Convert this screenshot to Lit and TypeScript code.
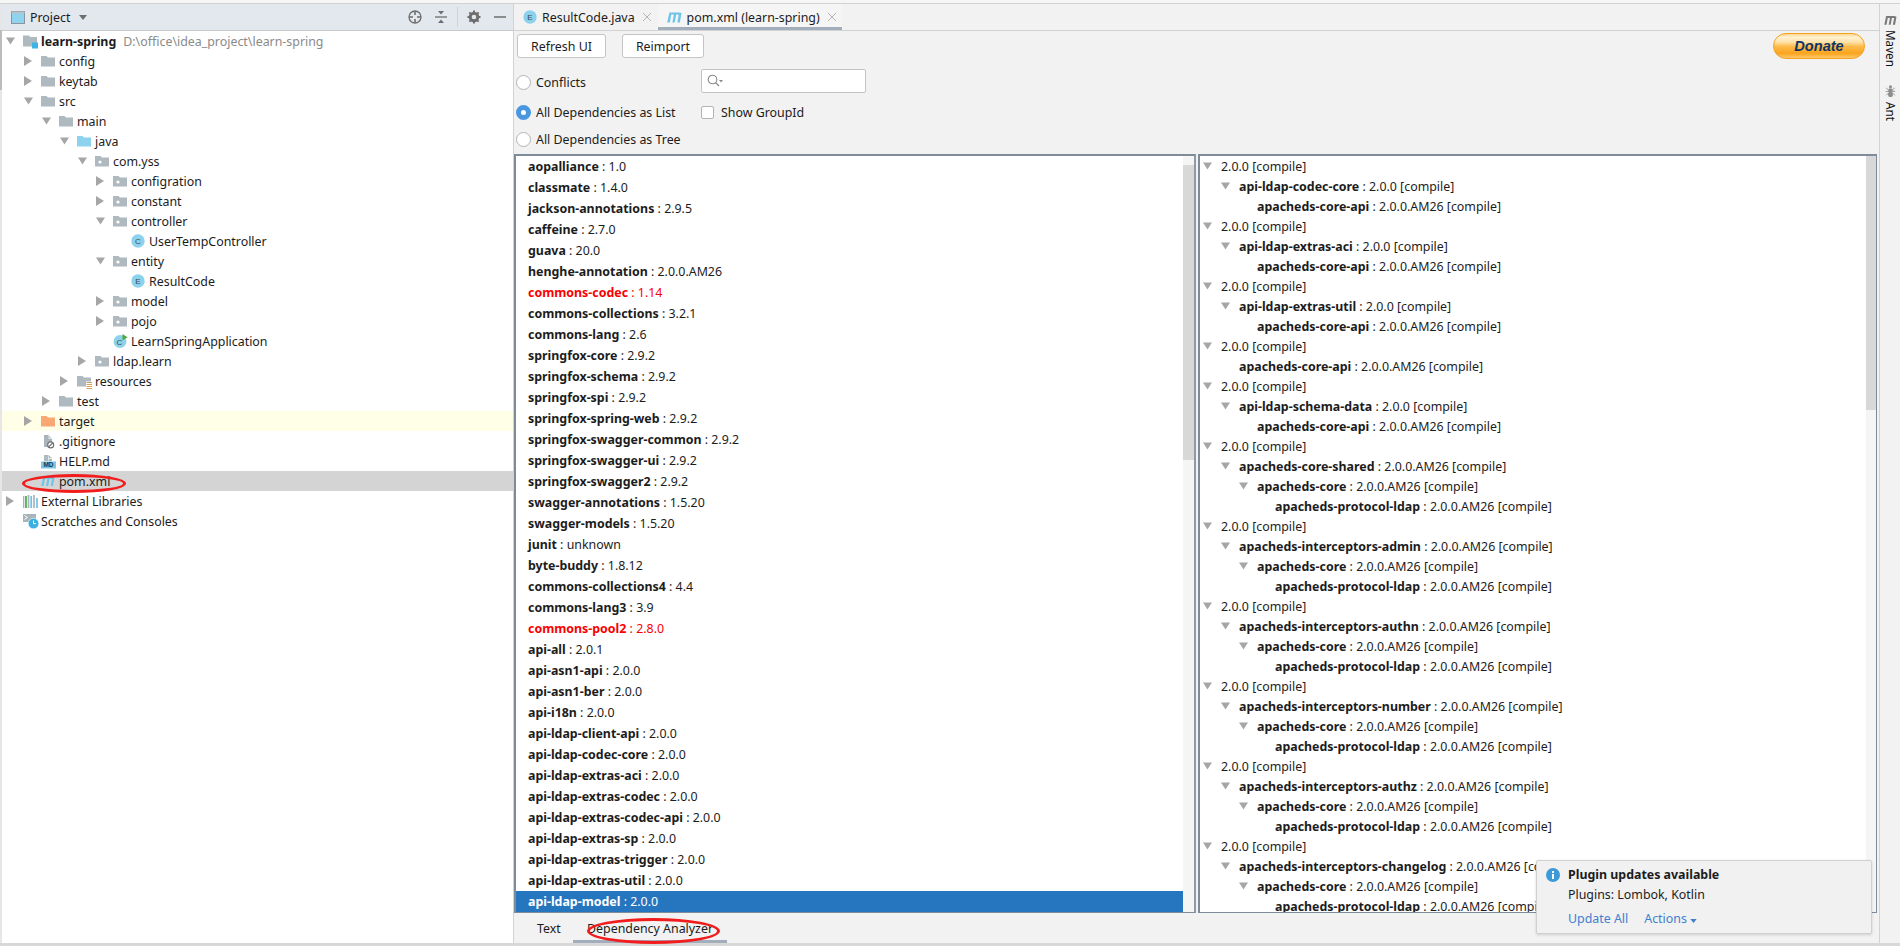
import { LitElement, html, css, svg } from "lit";
import { customElement } from "lit/decorators.js";

const FOLDER = "M0 2h5.500l1.500 1.500H14V12.500H0z";
const folder = (c: string, dot = false) => html`<svg class="ic" viewBox="0 0 14 14" width="14" height="14"><path d="${FOLDER}" fill="${c}"/>${dot ? svg`<circle cx="5" cy="8" r="1.600" fill="#fff"/>` : ""}</svg>`;
const grey = "#aeb9c0";
const circleIcon = (l: string, size = 14) => html`<svg class="ic" viewBox="0 0 14 14" width="${size}" height="${size}"><circle cx="7" cy="7" r="6.700" fill="#8dd2ec"/><text x="7" y="10" font-size="8" font-family="Liberation Sans" text-anchor="middle" fill="#3c4a52">${l}</text></svg>`;
const mIcon = (w = 14, h = 12) => html`<svg class="ic" viewBox="0 0 14 11" width="${w}" height="${h}"><path d="M2.200 1.200H11.200L13.600 1.800 12 10.600H9.600L11 3.400 8.600 3.200 7.200 10.600H5L6.400 3.200 4 3.200 2.600 10.600H.2z" fill="#6fc5e8"/></svg>`;

const icons: Record<string, any> = {
  module: html`<svg class="ic" viewBox="0 0 15 15" width="15" height="15"><path d="M0 1.500h6l1.200 1.500H14V12.500H0z" fill="${grey}"/><rect x="9" y="8.500" width="6" height="6" fill="#3fb4e4"/></svg>`,
  f: folder(grey),
  java: folder("#8dd3ef"),
  pkg: folder(grey, true),
  res: html`<svg class="ic" viewBox="0 0 15 15" width="15" height="15"><path d="M0 2h5.500l1.500 1.500H14V12.500H0z" fill="${grey}"/><rect x="9" y="7.500" width="6.500" height="7.500" fill="#fff"/><path d="M9.500 8.500h5.500M9.500 10.500h5.500M9.500 12.500h5.500M9.500 14.500h5.500" stroke="#d9a05c" stroke-width="1"/></svg>`,
  target: folder("#f9a873"),
  c: circleIcon("C"),
  e: circleIcon("E"),
  run: html`<svg class="ic" viewBox="0 0 15 14" width="15" height="14"><circle cx="7" cy="7.500" r="6.500" fill="#8dd2ec"/><text x="6.500" y="10.500" font-size="8" font-family="Liberation Sans" text-anchor="middle" fill="#3c4a52">C</text><path d="M9.500 0l5 3.200-5 3.200z" fill="#4fa83d"/></svg>`,
  git: html`<svg class="ic" viewBox="0 0 14 15" width="14" height="15"><path d="M3 1h4l.5 0v4h3.500v3H3z" fill="#a8b3ba"/><path d="M3 8h4v5H3z" fill="#a8b3ba"/><path d="M7 .5l4 4H7z" fill="#c5ccd1"/><circle cx="9.700" cy="10.900" r="3" fill="#fff" stroke="#6a7075" stroke-width="1.100"/><path d="M7.700 12.800l4-3.800" stroke="#6a7075" stroke-width="1.100"/></svg>`,
  md: html`<svg class="ic" viewBox="0 0 15 15" width="15" height="15"><path d="M3 1h4v6H3z M7.500 .8l3.500 3.500H7.500z M7.500 5h3.500v2H7.500z" fill="#aeb9c0"/><rect x="0" y="7.500" width="15" height="7" fill="#7cc6e6"/><text x="7.500" y="13.300" font-size="6.500" font-weight="700" font-family="Liberation Sans" text-anchor="middle" fill="#23353f">MD</text></svg>`,
  m: mIcon(),
  lib: html`<svg class="ic" viewBox="0 0 15 13" width="15" height="13"><path d="M.5 1v12M5.500 0v13" stroke="#a8b3ba" stroke-width="1.700"/><path d="M3 1v12" stroke="#4aa94a" stroke-width="1.700"/><path d="M8.200 1v12" stroke="#6fc2e6" stroke-width="1.700"/><path d="M11 0v13" stroke="#a8b3ba" stroke-width="1.700"/><path d="M14 3v10" stroke="#6fc2e6" stroke-width="1.700"/></svg>`,
  scr: html`<svg class="ic" viewBox="0 0 16 16" width="16" height="16"><rect x="0" y="1" width="13" height="8" fill="#a8b3ba"/><path d="M1.500 2.500l3 2-3 2" fill="none" stroke="#fff" stroke-width="1"/><circle cx="10.500" cy="10.500" r="5.300" fill="#39afe2" stroke="#fff" stroke-width=".6"/><path d="M10.500 7.500v3.200h2.400" fill="none" stroke="#fff" stroke-width="1"/></svg>`,
};

type Row = [number, string, string, string, string?, string?];
const tree: Row[] = [
  [0, "d", "module", "learn-spring", "D:\\office\\idea_project\\learn-spring", "bold"],
  [1, "r", "f", "config"], [1, "r", "f", "keytab"], [1, "d", "f", "src"], [2, "d", "f", "main"], [3, "d", "java", "java"],
  [4, "d", "pkg", "com.yss"], [5, "r", "pkg", "configration"], [5, "r", "pkg", "constant"], [5, "d", "pkg", "controller"],
  [6, "", "c", "UserTempController"], [5, "d", "pkg", "entity"], [6, "", "e", "ResultCode"], [5, "r", "pkg", "model"], [5, "r", "pkg", "pojo"],
  [5, "", "run", "LearnSpringApplication"], [4, "r", "pkg", "ldap.learn"], [3, "r", "res", "resources"], [2, "r", "f", "test"],
  [1, "r", "target", "target", "", "excluded"], [1, "", "git", ".gitignore"], [1, "", "md", "HELP.md"], [1, "", "m", "pom.xml", "", "sel"],
  [0, "r", "lib", "External Libraries"], [0, "", "scr", "Scratches and Consoles"],
];

const deps: [string, string, number?][] = [
  ["aopalliance","1.0"],["classmate","1.4.0"],["jackson-annotations","2.9.5"],["caffeine","2.7.0"],["guava","20.0"],["henghe-annotation","2.0.0.AM26"],
  ["commons-codec","1.14",1],["commons-collections","3.2.1"],["commons-lang","2.6"],["springfox-core","2.9.2"],["springfox-schema","2.9.2"],["springfox-spi","2.9.2"],
  ["springfox-spring-web","2.9.2"],["springfox-swagger-common","2.9.2"],["springfox-swagger-ui","2.9.2"],["springfox-swagger2","2.9.2"],["swagger-annotations","1.5.20"],["swagger-models","1.5.20"],
  ["junit","unknown"],["byte-buddy","1.8.12"],["commons-collections4","4.4"],["commons-lang3","3.9"],["commons-pool2","2.8.0",1],["api-all","2.0.1"],
  ["api-asn1-api","2.0.0"],["api-asn1-ber","2.0.0"],["api-i18n","2.0.0"],["api-ldap-client-api","2.0.0"],["api-ldap-codec-core","2.0.0"],["api-ldap-extras-aci","2.0.0"],
  ["api-ldap-extras-codec","2.0.0"],["api-ldap-extras-codec-api","2.0.0"],["api-ldap-extras-sp","2.0.0"],["api-ldap-extras-trigger","2.0.0"],["api-ldap-extras-util","2.0.0"],["api-ldap-model","2.0.0",2],
];

const AM = "2.0.0.AM26";
const right: [number, boolean, string, string][] = [
  [0,true,"","2.0.0"],[1,true,"api-ldap-codec-core","2.0.0"],[2,false,"apacheds-core-api",AM],
  [0,true,"","2.0.0"],[1,true,"api-ldap-extras-aci","2.0.0"],[2,false,"apacheds-core-api",AM],
  [0,true,"","2.0.0"],[1,true,"api-ldap-extras-util","2.0.0"],[2,false,"apacheds-core-api",AM],
  [0,true,"","2.0.0"],[1,false,"apacheds-core-api",AM],
  [0,true,"","2.0.0"],[1,true,"api-ldap-schema-data","2.0.0"],[2,false,"apacheds-core-api",AM],
  [0,true,"","2.0.0"],[1,true,"apacheds-core-shared",AM],[2,true,"apacheds-core",AM],[3,false,"apacheds-protocol-ldap",AM],
  [0,true,"","2.0.0"],[1,true,"apacheds-interceptors-admin",AM],[2,true,"apacheds-core",AM],[3,false,"apacheds-protocol-ldap",AM],
  [0,true,"","2.0.0"],[1,true,"apacheds-interceptors-authn",AM],[2,true,"apacheds-core",AM],[3,false,"apacheds-protocol-ldap",AM],
  [0,true,"","2.0.0"],[1,true,"apacheds-interceptors-number",AM],[2,true,"apacheds-core",AM],[3,false,"apacheds-protocol-ldap",AM],
  [0,true,"","2.0.0"],[1,true,"apacheds-interceptors-authz",AM],[2,true,"apacheds-core",AM],[3,false,"apacheds-protocol-ldap",AM],
  [0,true,"","2.0.0"],[1,true,"apacheds-interceptors-changelog",AM],[2,true,"apacheds-core",AM],[3,false,"apacheds-protocol-ldap",AM],
];

@customElement("app-root")
export class AppRoot extends LitElement {
  static styles = css`
    :host { display: block; width: 1900px; height: 946px; position: relative; overflow: hidden; background: #f2f2f2; font-family: "Noto Sans", sans-serif; font-size: 12.400px; color: #1c1c1c; }
    .ic { flex: none; display: block; }
    .top { height: 3px; background: #f6f6f6; border-bottom: 1px solid #d2d2d2; }
    .main { display: flex; height: 939px; }
    .strip { width: 2px; background: linear-gradient(#e6e6e6 0 26px, #bcbcbc 26px 86px, #e6e6e6 86px); flex: none; }
    .left { width: 511px; flex: none; background: #fff; display: flex; flex-direction: column; border-right: 1px solid #d2d2d2; box-sizing: content-box; }
    .lhead { height: 26px; background: #e3e7ee; border-bottom: 1px solid #c9c9c9; display: flex; align-items: center; padding: 0 0 0 9px; flex: none; }
    .lhead .title { margin-left: 5px; }
    .lhead .caret { margin-left: 9px; }
    .lhead .sp { flex: 1; }
    .hbtn { width: 26px; display: flex; justify-content: center; }
    .sep { width: 1px; height: 20px; background: #cfd3da; margin: 0 3px; }
    .row { height: 20px; display: flex; align-items: center; position: relative; white-space: nowrap; }
    .row .arrow { position: absolute; top: 0; height: 20px; display: flex; align-items: center; width: 10px; justify-content: center; }
    .ibox { width: 16px; display: flex; align-items: center; margin-right: 2px; flex: none; }
    .bold { font-weight: 700; }
    .path { color: #8a8a8a; margin-left: 7px; }
    .excluded { background: #fffee6; }
    .sel { background: #d4d4d4; }
    .center { flex: 1; display: flex; flex-direction: column; min-width: 0; }
    .tabs { height: 26px; flex: none; border-bottom: 1px solid #d2d2d2; display: flex; align-items: stretch; }
    .tab { display: flex; align-items: center; gap: 5px; padding: 0 4px 0 9px; position: relative; }
    .tab.on { background: #f5f5f5; box-shadow: inset 0 -3px 0 #a3aebd; padding: 0 3px 0 9px; }
    .x { color: #b5b5b5; width: 14px; height: 14px; }
    .body { flex: 1; display: flex; flex-direction: column; min-height: 0; }
    .controls { height: 123px; flex: none; display: flex; box-sizing: border-box; padding: 3px 14px 0 3px; }
    .ctl-col { display: flex; flex-direction: column; flex: none; width: 184px; }
    .btns { display: flex; gap: 16px; height: 24px; }
    .btn { box-sizing: border-box; height: 24px; background: #fff; border: 1px solid #c4c4c4; border-radius: 3px; display: flex; align-items: center; justify-content: center; white-space: nowrap; flex: none; }
    .radio { display: flex; align-items: center; gap: 5px; height: 20px; margin-left: -1px; white-space: nowrap; }
    .dot { width: 15px; height: 15px; box-sizing: border-box; border-radius: 50%; border: 1px solid #b4b4b4; background: #fff; flex: none; }
    .dot.on { border: 5.500px solid #4a97e0; }
    .ctl2 { display: flex; flex-direction: column; flex: none; }
    .search { width: 165px; height: 24px; box-sizing: border-box; background: #fff; border: 1px solid #c4c4c4; border-radius: 2px; display: flex; align-items: center; padding-left: 5px; }
    .chk { display: flex; align-items: center; gap: 7px; }
    .box { width: 13px; height: 13px; box-sizing: border-box; border: 1px solid #b4b4b4; border-radius: 2px; background: #fff; }
    .grow { flex: 1; }
    .donate { margin-top: -1px; width: 92px; height: 26px; box-sizing: border-box; border-radius: 13px; border: 1px solid #f5a11f; background: linear-gradient(#ffd98f 0%, #fff1d2 14%, #ffe2a8 34%, #fdbb4c 52%, #fba41e 80%, #ffc868 100%); color: #0d3467; font: italic 700 14.600px "Liberation Sans", sans-serif; display: flex; align-items: center; justify-content: center; }
    .panes { flex: 1; display: flex; min-height: 0; }
    .pane { background: #fff; box-sizing: border-box; border: 1px solid #7e8b99; border-top-width: 2px; border-left-width: 2px; display: flex; position: relative; overflow: hidden; }
    .p1 { width: 682px; border-right: 2px solid #8f9aa6; }
    .p2 { width: 679px; margin-left: 2px; }
    .list { flex: 1; min-width: 0; overflow: hidden; }
    .li { height: 21px; display: flex; align-items: center; padding-left: 12px; white-space: pre; }
    .li.red { color: #fb0000; }
    .li.cur { background: #2675bf; color: #fff; }
    .sb { width: 10px; background: #f5f5f5; flex: none; display: flex; flex-direction: column; }
    .p1 .sb { width: 11px; }
    .sb i { display: block; background: #d8d8d8; }
    .tr { height: 20px; display: flex; align-items: center; position: relative; white-space: pre; }
    .tr .a { width: 10px; display: flex; justify-content: center; margin-right: 9px; flex: none; }
    .bottom { height: 30px; flex: none; display: flex; padding-left: 23px; }
    .btab { display: flex; align-items: center; padding: 0 14px; height: 30px; box-sizing: border-box; }
    .btab.t1 { padding: 0; margin-right: 12px; width: 24px; }
    .btab.on { box-shadow: inset 0 -3px 0 #a3aebd; }
    .rstrip { width: 21px; flex: none; border-left: 1px solid #d2d2d2; display: flex; flex-direction: column; align-items: center; padding-top: 11px; box-sizing: border-box; }
    .vt { writing-mode: vertical-rl; font-size: 11.700px; line-height: 13px; color: #111; }
    .ellipse { position: absolute; border: 3px solid #f21c1c; border-radius: 50%; box-sizing: border-box; pointer-events: none; }
    .e1 { left: 22px; top: 474px; width: 104px; height: 19px; }
    .e2 { left: 587px; top: 918px; width: 133px; height: 26px; }
    .note { position: absolute; left: 1536px; top: 860px; width: 336px; height: 74px; box-sizing: border-box; background: #f1f1f1; border: 1px solid #d0d0d0; box-shadow: 0 1px 3px rgba(0,0,0,.15); border-radius: 2px; padding: 4px 9px; display: flex; gap: 8px; }
    .note .n-t { font-weight: 700; line-height: 20px; }
    .note .n-s { line-height: 20px; }
    .note .n-a { line-height: 24px; margin-top: 2px; color: #3f7fd0; display: flex; gap: 16px; align-items: center; }
    .bar-bottom { height: 3px; background: #d8d8d8; }
  `;

  arrow(k: string) {
    if (k === "r") return html`<svg viewBox="0 0 8 10" width="8" height="10"><path d="M0 0l8 5-8 5z" fill="#a6a6a6"/></svg>`;
    return html`<svg viewBox="0 0 10 8" width="9" height="8"><path d="M0 0h10l-5 8z" fill="#a6a6a6"/></svg>`;
  }

  treeRow(r: Row) {
    const [l, a, ic, t, extra, cls] = r;
    return html`<div class="row ${cls === "excluded" || cls === "sel" ? cls : ""}" style="padding-left:${21 + 18 * l}px">
      ${a ? html`<span class="arrow" style="left:${3 + 18 * l}px">${this.arrow(a)}</span>` : ""}
      <span class="ibox">${icons[ic]}</span><span class="${cls === "bold" ? "bold" : ""}">${t}</span>${extra ? html`<span class="path">${extra}</span>` : ""}
    </div>`;
  }

  render() {
    return html`
      <div class="top"></div>
      <div class="main">
        <div class="strip"></div>
        <div class="left">
          <div class="lhead">
            <svg class="ic" viewBox="0 0 14 13" width="14" height="13"><rect x=".5" y=".5" width="13" height="12" fill="#8fd3ef" stroke="#8b949c"/><rect x=".5" y=".5" width="13" height="2" fill="#b9c1c8"/></svg>
            <span class="title">Project</span>
            <svg class="caret" viewBox="0 0 8 5" width="8" height="5"><path d="M0 0h8l-4 5z" fill="#6e6e6e"/></svg>
            <span class="sp"></span>
            <span class="hbtn"><svg viewBox="0 0 14 14" width="14" height="14"><circle cx="7" cy="7" r="6" fill="none" stroke="#6e6e6e" stroke-width="1.300"/><path d="M7 1v4M7 9v4M1 7h4M9 7h4" stroke="#6e6e6e" stroke-width="1.600"/></svg></span>
            <span class="hbtn"><svg viewBox="0 0 14 14" width="14" height="14"><path d="M1 7h12" stroke="#6e6e6e" stroke-width="1.300"/><path d="M4 1h6L7 4.500zM4 13h6L7 9.500z" fill="#6e6e6e"/></svg></span>
            <span class="sep"></span>
            <span class="hbtn"><svg viewBox="0 0 14 14" width="14" height="14"><circle cx="7" cy="7" r="3.800" fill="none" stroke="#6e6e6e" stroke-width="3"/><path d="M7 .5v3M7 10.500v3M.5 7h3M10.500 7h3M2.400 2.400l2 2M9.600 9.600l2 2M11.600 2.400l-2 2M4.400 9.600l-2 2" stroke="#6e6e6e" stroke-width="2"/></svg></span>
            <span class="hbtn"><svg viewBox="0 0 14 14" width="14" height="14"><path d="M1 7h12" stroke="#6e6e6e" stroke-width="1.500"/></svg></span>
          </div>
          ${tree.map((r) => this.treeRow(r))}
        </div>
        <div class="center">
          <div class="tabs">
            <div class="tab">${circleIcon("E")}<span>ResultCode.java</span><svg class="x" viewBox="0 0 14 14"><path d="M3 3l8 8M11 3l-8 8" stroke="currentColor" stroke-width="1"/></svg></div>
            <div class="tab on">${mIcon(15, 12)}<span>pom.xml (learn-spring)</span><svg class="x" viewBox="0 0 14 14"><path d="M3 3l8 8M11 3l-8 8" stroke="currentColor" stroke-width="1"/></svg></div>
          </div>
          <div class="body">
            <div class="controls">
              <div class="ctl-col">
                <div class="btns"><div class="btn" style="width:89px">Refresh UI</div><div class="btn" style="width:82px">Reimport</div></div>
                <div class="radio" style="margin-top:14px"><span class="dot"></span>Conflicts</div>
                <div class="radio" style="margin-top:10px"><span class="dot on"></span>All Dependencies as List</div>
                <div class="radio" style="margin-top:7px"><span class="dot"></span>All Dependencies as Tree</div>
              </div>
              <div class="ctl2">
                <div style="height:35px"></div>
                <div class="search"><svg viewBox="0 0 16 14" width="16" height="14"><circle cx="5.500" cy="5.500" r="4.300" fill="none" stroke="#8a8a8a" stroke-width="1.100"/><path d="M8.500 8.500l3.500 3.500" stroke="#8a8a8a" stroke-width="1.200"/><path d="M12 6h4l-2 2.500z" fill="#8a8a8a"/></svg></div>
                <div class="chk" style="margin-top:11px"><span class="box"></span>Show GroupId</div>
              </div>
              <div class="grow"></div>
              <div class="donate">Donate</div>
            </div>
            <div class="panes">
              <div class="pane p1">
                <div class="list">${deps.map(([n, v, f]) => html`<div class="li ${f === 1 ? "red" : f === 2 ? "cur" : ""}"><span class="bold">${n}</span> : ${v}</div>`)}</div>
                <div class="sb"><i style="height:295px;margin-top:9px"></i></div>
              </div>
              <div class="pane p2">
                <div class="list">${right.map(([l, a, n, v]) => html`<div class="tr" style="padding-left:${2 + 18 * l}px">${a ? html`<span class="a">${this.arrow("d")}</span>` : html`<span class="a"></span>`}${n ? html`<span class="bold">${n}</span><span> : </span>` : ""}<span>${v} [compile]</span></div>`)}</div>
                <div class="sb"><i style="height:254px"></i></div>
              </div>
            </div>
            <div class="bottom">
              <div class="btab t1">Text</div>
              <div class="btab on">Dependency Analyzer</div>
            </div>
          </div>
        </div>
        <div class="rstrip">
          <svg viewBox="0 0 14 11" width="13" height="10"><path d="M2.200 1.200H11.200L13.600 1.800 12 10.600H9.600L11 3.400 8.600 3.200 7.200 10.600H5L6.400 3.200 4 3.200 2.600 10.600H.2z" fill="#7a7a7a"/></svg>
          <div class="vt" style="margin-top:5px">Maven</div>
          <svg style="margin-top:18px" viewBox="0 0 12 14" width="11" height="12"><circle cx="6" cy="2" r="1.800" fill="#8e8e8e"/><ellipse cx="6" cy="6.500" rx="2.600" ry="2.600" fill="#8e8e8e"/><ellipse cx="6" cy="11" rx="2.800" ry="3" fill="#8e8e8e"/><path d="M1 3.500l3 2.500M11 3.500l-3 2.500M.5 7.500h11M1 12l3-3M11 12l-3-3" stroke="#8e8e8e" stroke-width="1"/></svg>
          <div class="vt" style="margin-top:5px">Ant</div>
        </div>
      </div>
      <div class="bar-bottom"></div>
      <div class="ellipse e1"></div>
      <div class="ellipse e2"></div>
      <div class="note">
        <svg class="ic" viewBox="0 0 14 14" width="14" height="14" style="margin-top:3px"><circle cx="7" cy="7" r="7" fill="#3d9ad8"/><rect x="6" y="6" width="2" height="5" fill="#fff"/><rect x="6" y="3" width="2" height="2" fill="#fff"/></svg>
        <div>
          <div class="n-t">Plugin updates available</div>
          <div class="n-s">Plugins: Lombok, Kotlin</div>
          <div class="n-a"><span>Update All</span><span>Actions <svg viewBox="0 0 8 5" width="7" height="4"><path d="M0 0h8l-4 5z" fill="#3f7fd0"/></svg></span></div>
        </div>
      </div>
    `;
  }
}
